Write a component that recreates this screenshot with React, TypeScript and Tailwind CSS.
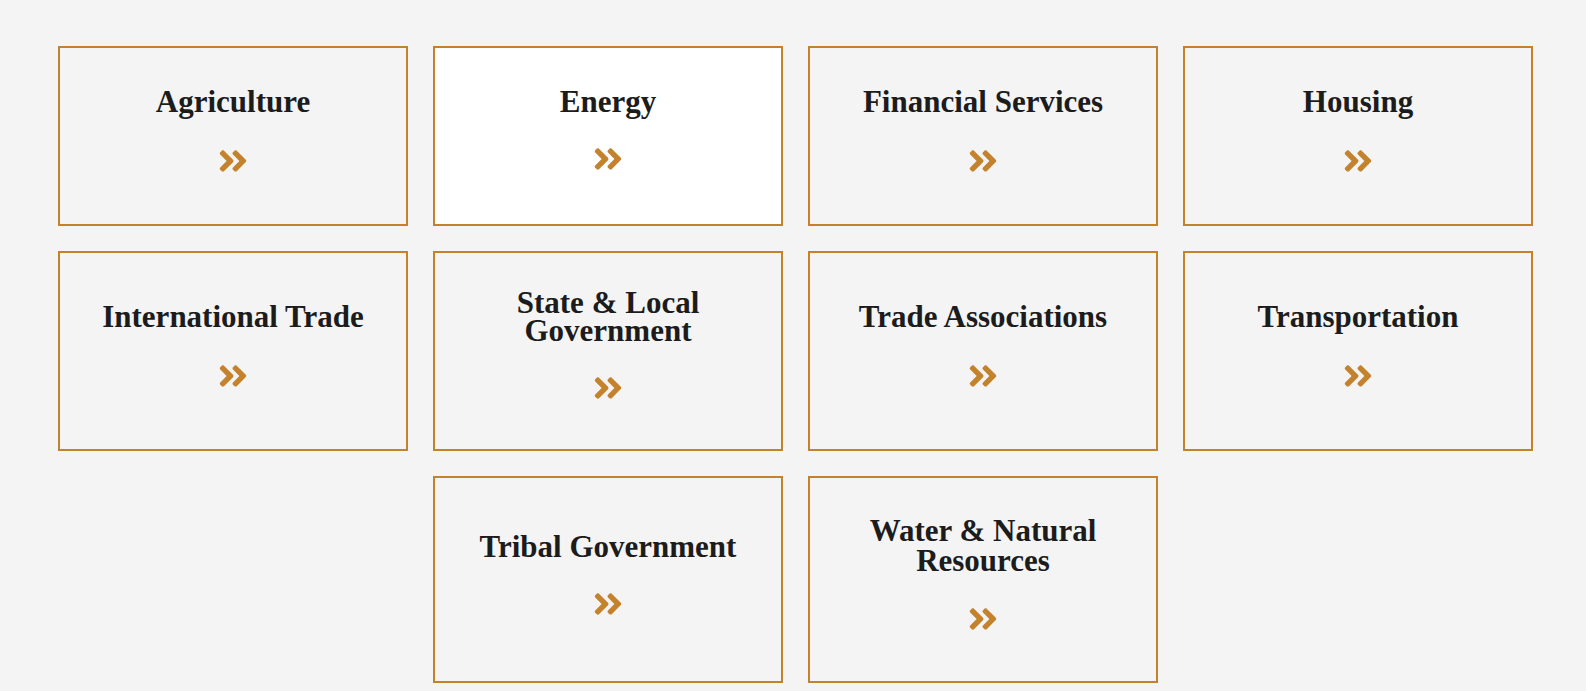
import React from 'react';
import { FaAngleDoubleRight } from 'react-icons/fa';

type Sector = {
  lines: string[];
  leading: string;
  gap?: string;
  active?: boolean;
};

// sectors grouped by row, each row has its own card height
const rows: { height: string; items: Sector[] }[] = [
  {
    height: 'h-[180px]',
    items: [
      { lines: ['Agriculture'], leading: 'leading-[32px]' },
      { lines: ['Energy'], leading: 'leading-[32px]', active: true },
      { lines: ['Financial Services'], leading: 'leading-[32px]' },
      { lines: ['Housing'], leading: 'leading-[32px]' },
    ],
  },
  {
    height: 'h-[200px]',
    items: [
      { lines: ['International Trade'], leading: 'leading-[32px]' },
      { lines: ['State & Local', 'Government'], leading: 'leading-[28px]' },
      { lines: ['Trade Associations'], leading: 'leading-[32px]' },
      { lines: ['Transportation'], leading: 'leading-[32px]' },
    ],
  },
  {
    height: 'h-[207px]',
    items: [
      { lines: ['Tribal Government'], leading: 'leading-[32px]', gap: 'mt-[24px]' },
      { lines: ['Water & Natural', 'Resources'], leading: 'leading-[30px]' },
    ],
  },
];

function SectorCard({ sector, height }: { sector: Sector; height: string }) {
  return (
    <a
      href="#"
      className={`${height} w-[350px] border-2 border-[#c4822d] flex flex-col items-center justify-center pb-[8px] ${
        sector.active ? 'bg-white' : 'bg-[#f4f4f4]'
      }`}
    >
      <h3
        className={`text-[31px] font-bold text-[#1c1c1c] text-center ${sector.leading}`}
        style={{ fontFamily: '"Liberation Serif", "Times New Roman", serif' }}
      >
        {sector.lines.map((line, i) => (
          <span key={i} className="block">
            {line}
          </span>
        ))}
      </h3>
      <FaAngleDoubleRight
        size={34}
        className={`block ${sector.gap ?? 'mt-[26px]'} text-[#c4822d] ${
          sector.active ? '-translate-y-[2px]' : ''
        }`}
      />
    </a>
  );
}

export default function App() {
  return (
    <div className="min-h-screen bg-[#f4f4f4] pt-[46px] pl-[58px]">
      <div className="w-[1475px] flex flex-col gap-[25px]">
        {rows.map((row, r) => (
          <div key={r} className="flex justify-center gap-[25px]">
            {row.items.map((s) => (
              <SectorCard key={s.lines.join(' ')} sector={s} height={row.height} />
            ))}
          </div>
        ))}
      </div>
    </div>
  );
}
